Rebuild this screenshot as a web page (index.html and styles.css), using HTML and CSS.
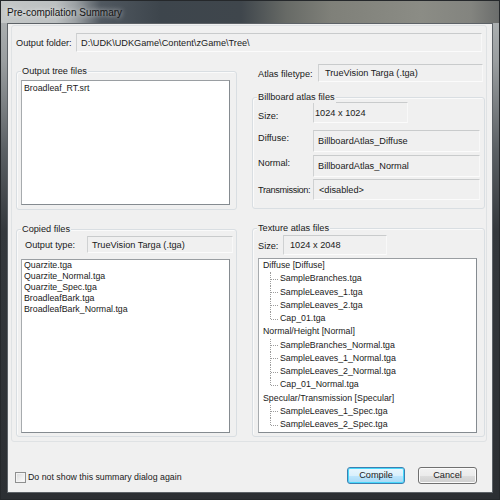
FILE: index.html
```html
<!DOCTYPE html>
<html>
<head>
<meta charset="utf-8">
<title>Pre-compilation Summary</title>
<link rel="stylesheet" href="styles.css">
</head>
<body>
<div class="window">
  <div class="titlebar"><span class="title">Pre-compilation Summary</span></div>
  <div class="client">
    <div class="frame">
      <div class="folder-row">
        <span class="label">Output folder:</span>
        <div class="field field-folder">D:\UDK\UDKGame\Content\zGame\Tree\</div>
      </div>
      <div class="columns">
        <div class="col-left">
          <div class="group group-tree">
            <span class="group-label">Output tree files</span>
            <div class="listbox list-tree">
              <div>Broadleaf_RT.srt</div>
            </div>
          </div>
          <div class="group group-copied">
            <span class="group-label">Copied files</span>
            <div class="row row-outtype">
              <span class="label">Output type:</span>
              <div class="field field-outtype">TrueVision Targa (.tga)</div>
            </div>
            <div class="listbox list-copied">
              <div>Quarzite.tga</div>
              <div>Quarzite_Normal.tga</div>
              <div>Quarzite_Spec.tga</div>
              <div>BroadleafBark.tga</div>
              <div>BroadleafBark_Normal.tga</div>
            </div>
          </div>
        </div>
        <div class="col-right">
          <div class="row row-atlas">
            <span class="label">Atlas filetype:</span>
            <div class="field field-atlas">TrueVision Targa (.tga)</div>
          </div>
          <div class="group group-billboard">
            <span class="group-label">Billboard atlas files</span>
            <div class="row bb-row bb-size">
              <span class="label bb-label label-low">Size:</span>
              <div class="field field-bbsize">1024 x 1024</div>
            </div>
            <div class="row bb-row bb-diffuse">
              <span class="label bb-label label-high">Diffuse:</span>
              <div class="field field-wide">BillboardAtlas_Diffuse</div>
            </div>
            <div class="row bb-row bb-normal">
              <span class="label bb-label label-high">Normal:</span>
              <div class="field field-wide">BillboardAtlas_Normal</div>
            </div>
            <div class="row bb-row bb-trans">
              <span class="label bb-label label-tight">Transmission:</span>
              <div class="field field-wide field-trans">&lt;disabled&gt;</div>
            </div>
          </div>
          <div class="group group-texture">
            <span class="group-label">Texture atlas files</span>
            <div class="row tx-size">
              <span class="label tx-label">Size:</span>
              <div class="field field-txsize">1024 x 2048</div>
            </div>
            <div class="tree">
              <div class="node">Diffuse [Diffuse]</div>
              <div class="children">
                <div class="leaf">SampleBranches.tga</div>
                <div class="leaf">SampleLeaves_1.tga</div>
                <div class="leaf">SampleLeaves_2.tga</div>
                <div class="leaf">Cap_01.tga</div>
              </div>
              <div class="node">Normal/Height [Normal]</div>
              <div class="children">
                <div class="leaf">SampleBranches_Normal.tga</div>
                <div class="leaf">SampleLeaves_1_Normal.tga</div>
                <div class="leaf">SampleLeaves_2_Normal.tga</div>
                <div class="leaf">Cap_01_Normal.tga</div>
              </div>
              <div class="node">Specular/Transmission [Specular]</div>
              <div class="children">
                <div class="leaf">SampleLeaves_1_Spec.tga</div>
                <div class="leaf">SampleLeaves_2_Spec.tga</div>
              </div>
            </div>
          </div>
        </div>
      </div>
    </div>
    <div class="bottom">
      <label class="check">
        <span class="checkbox"></span>
        <span class="check-text">Do not show this summary dialog again</span>
      </label>
      <div class="buttons">
        <button class="btn btn-default">Compile</button>
        <button class="btn">Cancel</button>
      </div>
    </div>
  </div>
</div>
</body>
</html>
```

FILE: styles.css
```css
* { box-sizing: border-box; }

html, body {
  margin: 0;
  padding: 0;
  background: #2b2e31;
}

body {
  font-family: "Liberation Sans", Arial, sans-serif;
  font-size: 9.2px;
  color: #1a1a1a;
}

.window {
  width: 500px;
  height: 500px;
  border: 1px solid #25282b;
  padding: 0 6px 6px 6px;
  background: linear-gradient(180deg, #b4b8b9 0px, #9a9ea0 60px, #5a5f63 150px, #34383c 230px, #2c2f33 100%);
}

.titlebar {
  height: 22px;
  margin: 0 -6px;
  padding-left: 6px;
  display: flex;
  align-items: center;
  background: linear-gradient(90deg, #c4c7c7 0px, #bcc0c1 55px, #9a9fa2 75px, #505860 100px, #3d454c 160px, #3f464c 240px, #676a66 285px, #7f8079 330px, #8b8c85 420px, #83847f 470px, #6a6c6b 499px);
}

.title {
  font-size: 10px;
  color: #151515;
  text-shadow: 0 0 5px rgba(255, 255, 255, 0.9);
}

.client {
  height: 470px;
  background: #f0f0f0;
  border: 1px solid #5d6267;
  display: flex;
  flex-direction: column;
}

.frame {
  margin: 1px 5px 0 3px;
  height: 417px;
  border: 1px solid #dfe2e4;
  border-radius: 3px;
}

.label {
  white-space: nowrap;
  flex-shrink: 0;
}

.row {
  display: flex;
  align-items: center;
}

.field {
  display: flex;
  align-items: center;
  flex-shrink: 0;
  padding-left: 4px;
  background: #f0f0f0;
  border-top: 1px solid #c9cbcc;
  border-left: 1px solid #cfd1d2;
  border-bottom: 1px solid #fbfbfb;
  border-right: 1px solid #f8f8f8;
  white-space: nowrap;
  overflow: hidden;
}

/* Output folder */
.folder-row {
  display: flex;
  align-items: center;
  padding: 7px 4px 0 4px;
}

.field-folder {
  margin-left: auto;
  width: 406px;
  height: 19px;
}

.columns {
  display: grid;
  grid-template-columns: 221px 236px;
  column-gap: 13px;
  padding-left: 4px;
}

/* Groups */
.group {
  position: relative;
  border: 1px solid #d9dee2;
  border-radius: 3px;
  box-shadow: inset 1px 1px 0 #fafafa;
}

.group-label {
  position: absolute;
  top: -7px;
  left: 4px;
  line-height: 12px;
  padding: 0 1px;
  background: #f0f0f0;
  white-space: nowrap;
}

.listbox {
  background: #ffffff;
  border: 1px solid #858b90;
  border-left-color: #a7abae;
  border-top-color: #9a9ea2;
  font-size: 8.8px;
  line-height: 11px;
  padding: 0 2px;
  overflow: hidden;
}

/* Left column */
.group-tree {
  margin-top: 19px;
  height: 139px;
  padding: 8px 6px 4px 4px;
}

.list-tree {
  width: 209px;
  height: 125px;
  padding-top: 2px;
}

.group-copied {
  margin-top: 19px;
  height: 208px;
  padding: 6px 6px 3px 4px;
}

.row-outtype {
  height: 17px;
}

.row-outtype .label {
  padding-left: 4px;
  width: 66px;
}

.field-outtype {
  width: 146px;
  height: 17px;
  margin-left: auto;
  margin-right: 1px;
}

.list-copied {
  margin-top: 6px;
  width: 209px;
  height: 174px;
  padding-top: 0;
}

/* Right column */
.row-atlas {
  margin-top: 12px;
  height: 18px;
  padding-left: 8px;
}

.row-atlas .label {
  padding-top: 2px;
}

.field-atlas {
  width: 165px;
  height: 18px;
  margin-left: auto;
  margin-right: 3px;
  padding-left: 6px;
}

.group-billboard {
  margin: 15px 1px 0 2px;
  height: 112px;
  padding: 0 0 0 5px;
}

.bb-label {
  width: 55px;
}

.label-low {
  padding-top: 6px;
}

.label-high {
  padding-bottom: 6px;
}

.label-tight {
  letter-spacing: -0.35px;
}

.bb-size {
  margin-top: 4px;
  height: 21px;
}

.field-bbsize {
  width: 95px;
  height: 21px;
  padding-left: 1px;
}

.bb-diffuse {
  margin-top: 7px;
  height: 22px;
}

.bb-normal {
  margin-top: 3px;
  height: 22px;
}

.bb-trans {
  margin-top: 2px;
  height: 21px;
}

.field-wide {
  width: 167px;
  height: 100%;
  padding-left: 4px;
}

.field-trans {
  padding-left: 5px;
}

.group-texture {
  margin: 19px 1px 0 2px;
  height: 209px;
  padding: 0 0 0 5px;
}

.tx-size {
  margin-top: 6px;
  height: 20px;
}

.tx-label {
  width: 25px;
  padding-top: 1px;
}

.field-txsize {
  width: 104px;
  height: 20px;
  padding-left: 6px;
}

.tree {
  margin-top: 3px;
  width: 219px;
  height: 175px;
  background: #ffffff;
  border: 1px solid #858b90;
  border-left-color: #a7abae;
  border-top-color: #9a9ea2;
  padding-left: 4px;
  font-size: 8.8px;
  line-height: 13.25px;
  overflow: hidden;
}

.node {
  white-space: nowrap;
}

.leaf {
  position: relative;
  padding-left: 17px;
  white-space: nowrap;
}

.leaf::before {
  content: "";
  position: absolute;
  left: 7px;
  top: 0;
  bottom: 0;
  border-left: 1px dotted #9c9c9c;
}

.leaf:last-child::before {
  bottom: 50%;
}

.leaf::after {
  content: "";
  position: absolute;
  left: 8px;
  top: 50%;
  width: 7px;
  border-top: 1px dotted #9c9c9c;
}

/* Bottom bar */
.bottom {
  flex: 1;
  display: flex;
  align-items: center;
  padding: 16px 15px 0 7px;
}

.check {
  display: flex;
  align-items: center;
  margin-top: 4px;
}

.checkbox {
  width: 11px;
  height: 11px;
  border: 1px solid #8e8f8f;
  background: linear-gradient(135deg, #d8d9da 0%, #f0f0f0 60%, #fbfbfb 100%);
  box-shadow: inset 0 0 0 1px #f4f4f4;
}

.check-text {
  margin-left: 2px;
  font-size: 8.8px;
}

.buttons {
  margin-left: auto;
  display: flex;
  gap: 13px;
}

.btn {
  width: 59px;
  height: 17px;
  padding: 0;
  font-family: "Liberation Sans", Arial, sans-serif;
  font-size: 9.2px;
  color: #1a1a1a;
  border: 1px solid #707070;
  border-radius: 3px;
  background: linear-gradient(180deg, #f2f2f2 0%, #ebebeb 50%, #dddddd 51%, #cfcfcf 100%);
  box-shadow: inset 0 0 0 1px #fbfbfb;
}

.btn-default {
  width: 58px;
  border-color: #3c7fb1;
  background: linear-gradient(180deg, #eaf6fd 0%, #d9f0fc 50%, #bee6fd 51%, #a7d9f5 100%);
  box-shadow: inset 0 0 0 1px #48d8fb;
}
```
